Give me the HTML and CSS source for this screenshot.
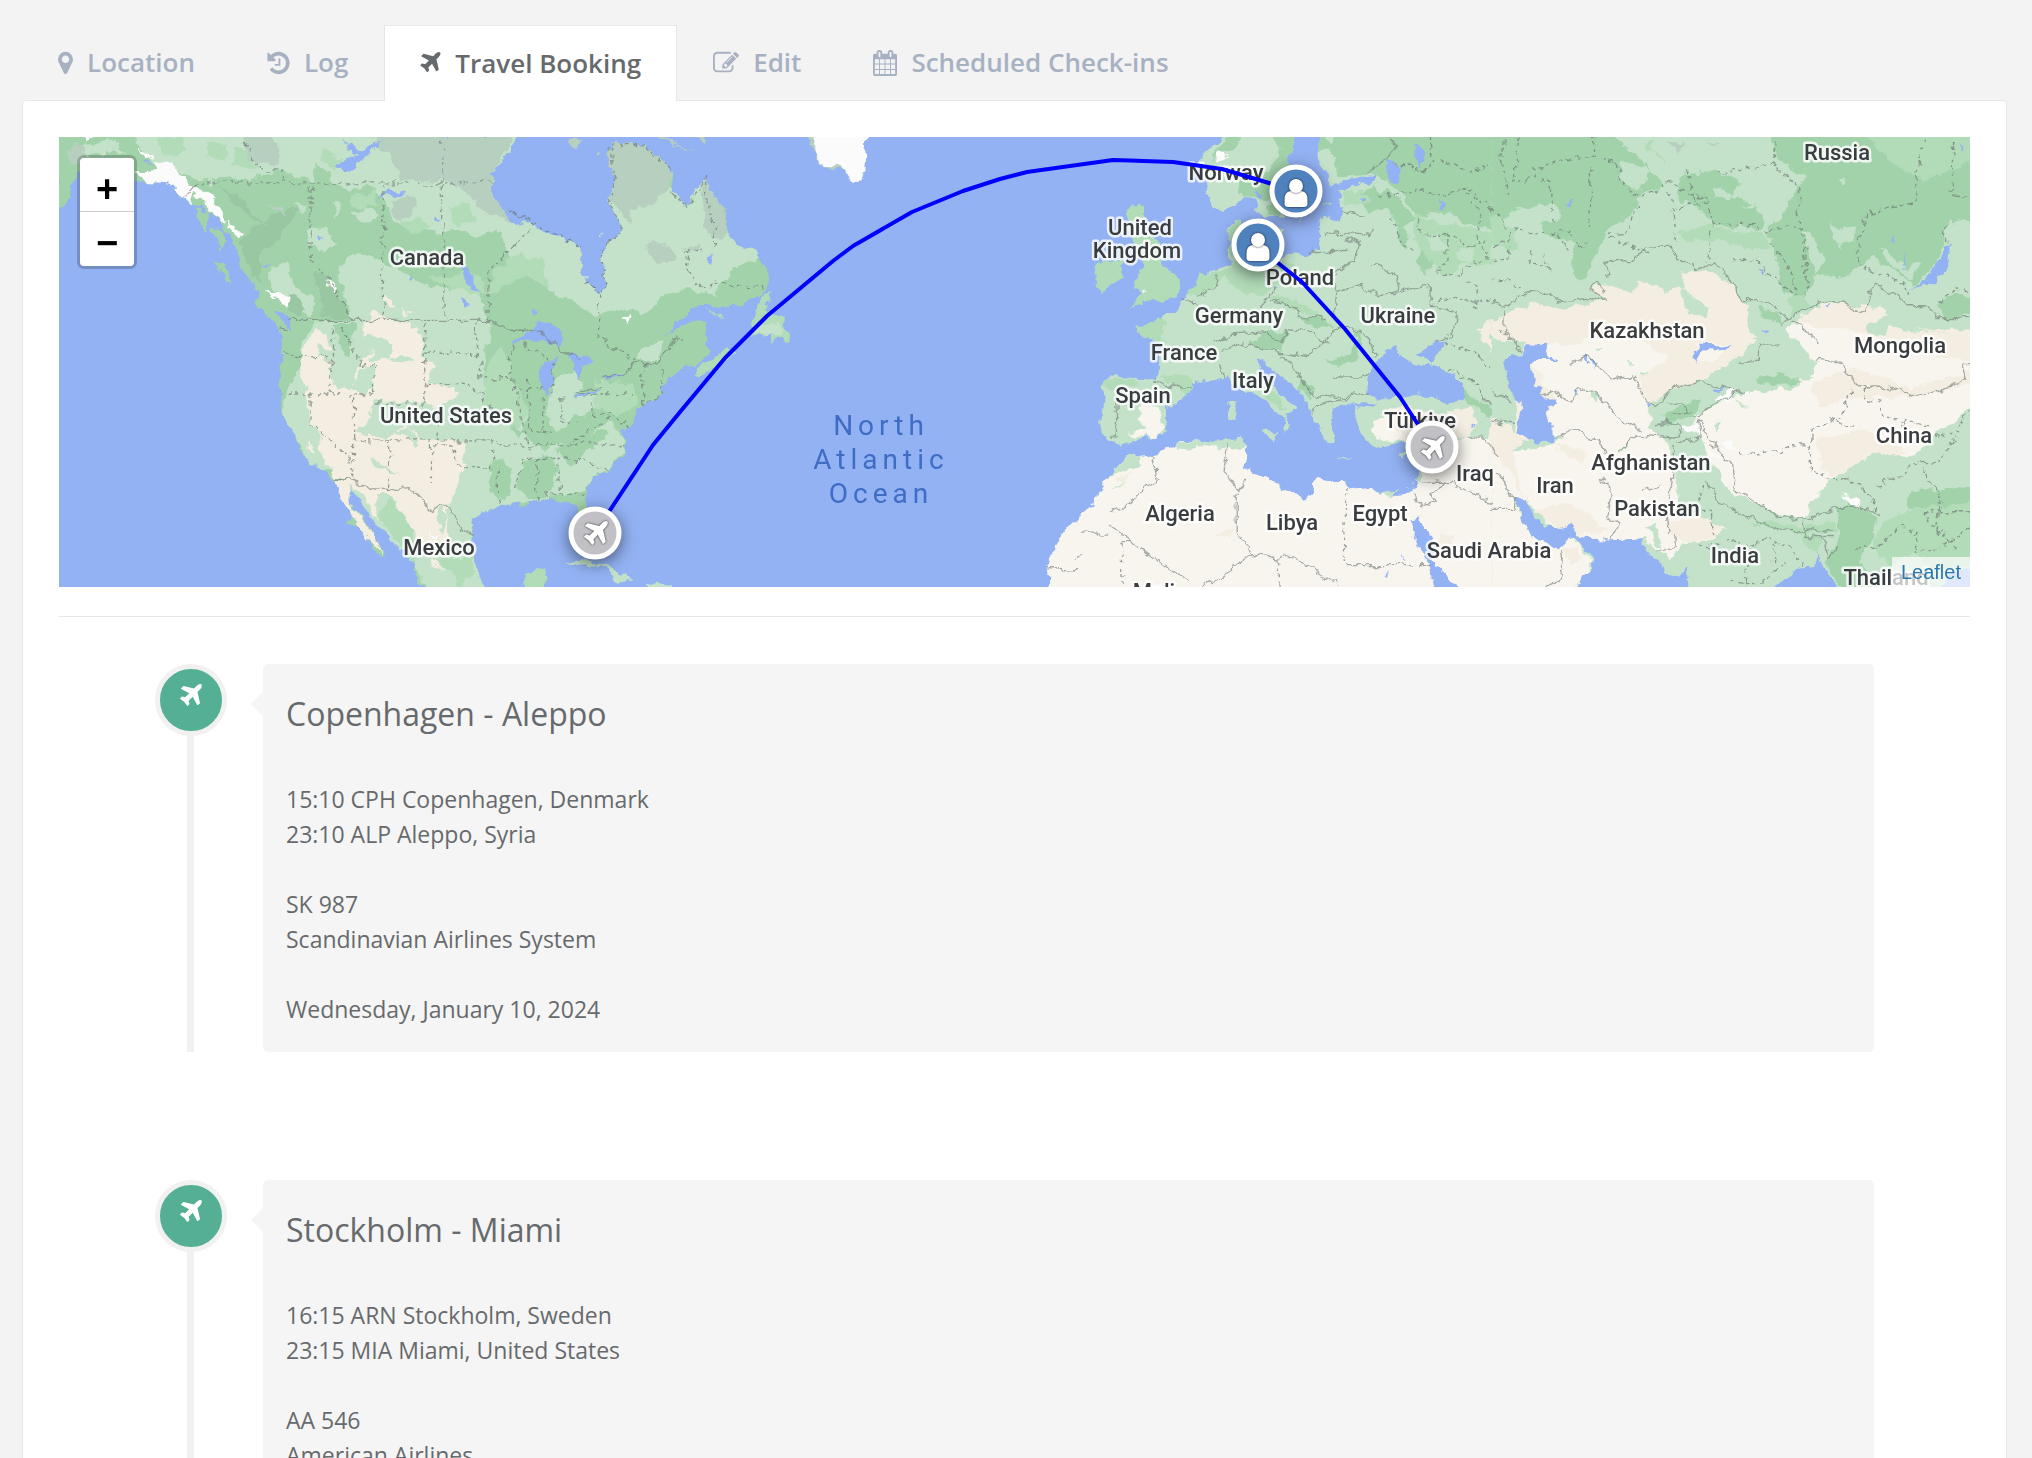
FILE: index.html
```html
<!DOCTYPE html>
<html lang="en">
  <head>
    <meta charset="utf-8">
    <title>Travel Booking</title>
    <link rel="stylesheet" href="styles.css">
  </head>
  <body>
    <!-- Shared icons -->
    <svg class="sprite" aria-hidden="true">
      <symbol id="icon-plane" viewBox="192 128 1408 1536">
        <path d="M1568 160q44 52 12 148t-108 172l-161 161 160 696q5 19-12 33l-128 96q-7 6-19 6-4 0-7-1-15-3-21-16l-279-508-259 259 53 194q5 17-8 31l-96 96q-9 9-23 9h-2q-15-2-24-13l-189-252-252-189q-11-7-13-23-1-13 9-25l96-97q9-9 23-9 6 0 8 1l194 53 259-259-508-279q-14-8-17-24-2-16 9-27l128-128q14-13 30-8l665 159 160-160q76-76 172-108t148 12z"/>
      </symbol>
    </svg>

    <nav class="tabs">
      <a class="tab" href="#location">
        <svg class="icon icon-marker" viewBox="384 0 1024 1792"><path d="M1152 640q0-106-75-181t-181-75-181 75-75 181 75 181 181 75 181-75 75-181zm256 0q0 109-33 179l-364 774q-16 33-47.5 52t-67.5 19-67.5-19-46.5-52l-365-774q-33-70-33-179 0-212 150-362t362-150 362 150 150 362z"/></svg>
        Location
      </a>
      <a class="tab" href="#log">
        <svg class="icon icon-log" viewBox="128 0 1536 1792"><path d="M1664 896q0 156-61 298t-164 245-245 164-298 61q-172 0-327-72.5t-264-204.5q-7-10-6.5-22.5t8.5-20.5l137-138q10-9 25-9 16 2 23 12 73 95 179 147t225 52q104 0 198.5-40.5t163.5-109.5 109.5-163.5 40.5-198.5-40.5-198.5-109.5-163.5-163.5-109.5-198.5-40.5q-98 0-188 35.5t-160 101.5l137 138q31 30 14 69-17 40-59 40h-448q-26 0-45-19t-19-45v-448q0-42 40-59 39-17 69 14l130 129q107-101 244.5-156.5t284.5-55.5q156 0 298 61t245 164 164 245 61 298zm-640-288v448q0 14-9 23t-23 9h-320q-14 0-23-9t-9-23v-64q0-14 9-23t23-9h224v-352q0-14 9-23t23-9h64q14 0 23 9t9 23z"/></svg>
        Log
      </a>
      <a class="tab active" href="#travel" aria-current="page">
        <svg class="icon icon-travel"><use href="#icon-plane"/></svg>
        Travel Booking
      </a>
      <a class="tab" href="#edit">
        <svg class="icon icon-edit" viewBox="0 0 1792 1792"><path d="M888 1184l116-116-152-152-116 116v56h96v96h56zm440-720q-16-16-33 1l-350 350q-17 17-1 33t33-1l350-350q17-17 1-33zm80 594v190q0 119-84.5 203.5t-203.5 84.5h-832q-119 0-203.5-84.5t-84.5-203.5v-832q0-119 84.5-203.5t203.5-84.5h832q63 0 117 25 15 7 18 23 3 17-9 29l-49 49q-14 14-32 8-23-6-45-6h-832q-66 0-113 47t-47 113v832q0 66 47 113t113 47h832q66 0 113-47t47-113v-126q0-13 9-22l64-64q15-15 35-7t20 29zm-96-738l288 288-672 672h-288v-288zm444 132l-92 92-288-288 92-92q28-28 68-28t68 28l152 152q28 28 28 68t-28 68z"/></svg>
        Edit
      </a>
      <a class="tab" href="#checkins">
        <svg class="icon icon-calendar" viewBox="64 0 1664 1792"><path d="M192 1664h288v-288h-288v288zm352 0h320v-288h-320v288zm-352-352h288v-320h-288v320zm352 0h320v-320h-320v320zm-352-384h288v-288h-288v288zm736 736h320v-288h-320v288zm-384-736h320v-288h-320v288zm768 736h288v-288h-288v288zm-384-352h320v-320h-320v320zm-352-864v-288q0-13-9.5-22.5t-22.5-9.5h-64q-13 0-22.5 9.5t-9.5 22.5v288q0 13 9.5 22.5t22.5 9.5h64q13 0 22.5-9.5t9.5-22.5zm736 864h288v-320h-288v320zm-384-384h320v-288h-320v288zm384 0h288v-288h-288v288zm32-480v-288q0-13-9.5-22.5t-22.5-9.5h-64q-13 0-22.5 9.5t-9.5 22.5v288q0 13 9.5 22.5t22.5 9.5h64q13 0 22.5-9.5t9.5-22.5zm384-64v1280q0 52-38 90t-90 38h-1408q-52 0-90-38t-38-90v-1280q0-52 38-90t90-38h128v-96q0-66 47-113t113-47h64q66 0 113 47t47 113v96h384v-96q0-66 47-113t113-47h64q66 0 113 47t47 113v96h128q52 0 90 38t38 90z"/></svg>
        Scheduled Check-ins
      </a>
    </nav>

    <main class="panel">
      <div class="map">
        <svg class="map-canvas" viewBox="0 0 1911 450" preserveAspectRatio="xMidYMid slice" role="img" aria-label="Flight routes">
          <!-- Roughens coasts and borders -->
          <filter id="rough" filterUnits="userSpaceOnUse" x="-10" y="-10" width="1935" height="475" color-interpolation-filters="sRGB">
            <feTurbulence type="fractalNoise" baseFrequency=".09" numOctaves="3" seed="4"/>
            <feDisplacementMap in="SourceGraphic" scale="11" xChannelSelector="R" yChannelSelector="G"/>
          </filter>
          <g class="terrain" transform="translate(-3 -4) scale(1.003 1.018)">
          <!-- North America -->
          <g transform="translate(-9 -7) scale(.33333)">
            <path class="forest" d="M27 21V265L45 240 75 210 65 175 90 140 260 158 300 165 370 170 400 205 430 235 470 240 500 270 530 300 555 340 575 390 580 420 610 450 630 490 615 520 640 550 690 590 700 640 700 700 695 760 705 860 740 910 755 950 780 990 820 1000 860 1045 880 1100 915 1150 900 1165 930 1175 960 1220 970 1245 1005 1272 1015 1262 985 1220 960 1180 935 1140 905 1105 905 1065 935 1075 960 1120 990 1160 1020 1195 1020 1215 1060 1240 1100 1290 1110 1340 1140 1372H1310L1270 1320 1275 1270 1275 1215 1270 1160 1310 1130 1360 1115 1400 1112 1415 1122 1440 1120 1435 1105 1500 1095 1535 1110 1570 1105 1590 1130 1600 1180 1620 1170 1615 1100 1620 1055 1670 1015 1730 970 1730 930 1720 890 1735 905 1750 870 1775 825 1840 795 1840 765 1880 725 1950 700 1990 670 1975 640 1965 615 1980 585 1950 570 1910 580 1850 620 1880 580 1930 535 2070 530 2140 490 2162 470 2158 430 2120 375 2070 355 2040 320 2035 265 2000 220 1970 150 1950 190 1945 220 1915 235 1880 215 1870 190 1870 135 1830 105 1790 55 1730 60 1690 50 1680 90 1700 165 1675 215 1710 250 1720 300 1695 350 1655 375 1670 430 1675 470 1648 500 1605 460 1598 360 1540 350 1490 325 1435 285 1380 285 1365 245 1330 205 1330 140 1365 80 1390 40 1418 21z"/>
            <!-- lighter woodland and prairie -->
            <path class="light" d="M260 21L300 100 390 130 450 160 520 150 600 160 690 130 800 165 800 21zM800 21L780 80 840 150 900 190 960 175 1000 210 1050 290 1100 300 1170 320 1230 300 1290 330 1350 300 1400 400 1480 390 1500 480 1570 520 1640 560 1720 540 1790 550 1850 500 1930 480 2000 500 2050 420 2130 390 2120 375 2070 355 2040 320 2000 220 1970 150 1915 235 1870 190 1790 55 1690 50 1700 165 1675 215 1720 300 1655 375 1675 470 1648 500 1605 460 1598 360 1435 285 1380 285 1330 205V140L1418 21z"/>
            <path class="light" d="M870 410L930 375 960 380 1000 400 1050 420 1130 470 1200 480 1290 480 1310 540 1322 575 1340 620 1310 660 1300 740 1380 760 1440 850 1420 900 1480 960 1600 900 1650 850 1720 900 1730 960 1620 1055 1600 1080 1500 1090 1440 1110 1360 1115 1270 1160 1275 1270 1310 1372H1140L1100 1290 1020 1215 905 1065 880 1030 780 990 740 910 705 860 710 800 760 700 760 640 800 580 910 570z"/>
            <path class="light" d="M770 310L830 300 870 350 820 365 790 350zM660 430L720 400 740 480 800 500 790 580 750 540 670 470zM1520 740L1580 720 1600 760 1580 800 1660 790 1640 840 1580 860 1530 900 1490 860zM1770 660L1850 630 1830 690 1770 690zM90 60L200 40 240 80 200 75 110 90zM470 90L500 100 490 120zM540 80L570 100 550 130 530 110zM740 220L780 240 760 260zM850 220L880 230 870 270zM910 260L960 240 990 260 950 290zM480 150L510 170 490 180z"/>
            <path class="mid" d="M1140 440L1200 450 1240 430 1300 440 1310 500 1250 490 1200 470 1160 460zM1310 500L1340 430 1400 380 1480 390 1500 480 1430 440 1380 470zM1300 740L1360 640 1400 760 1440 850 1400 900 1370 850 1310 830zM1640 750L1750 760 1770 820 1700 850 1640 840zM1020 1090L1090 1170 1100 1290 1040 1220 990 1150zM1150 1290L1210 1310 1230 1372 1270 1320 1275 1270 1210 1270zM560 60L600 80 640 130 560 120zM480 40L540 60 530 100 470 90zM820 60L880 100 860 140 830 110zM900 210L980 190 990 240 930 240zM1050 290L1110 270 1150 300 1090 320zM1200 240L1260 230 1280 280 1220 290zM330 40L400 30 420 80 360 90z"/>
            <path class="forest" d="M1330 990L1370 980 1390 1020 1385 1080 1340 1100 1320 1060zM1420 990L1500 970 1530 1010 1510 1080 1450 1100 1410 1070zM1580 870L1660 830 1690 860 1600 930 1520 960zM1530 950L1650 900 1680 910 1560 1000zM2050 440L2100 400 2140 400 2130 440 2070 470 2030 470zM1320 600L1400 580 1490 640 1480 690 1400 680 1340 640zM860 580L930 580 910 640 900 680 870 650zM1390 880L1420 900 1410 930z"/>
            <path class="dark" d="M640 380L690 330 740 270 760 250 730 240 680 260 610 310 580 350 600 420 640 460zM800 430L830 440 870 490 905 560 870 565 825 560 820 500zM520 180L590 220 660 300 600 260 540 220zM720 490L770 520 760 560 730 550z"/>
            <path class="tundra" d="M960 21H1418L1390 40 1365 80 1330 140V205L1365 245 1380 285 1320 260 1270 210 1200 160 1050 160 1030 80 980 50zM580 21H670L700 80 690 115 640 110 600 90zM1025 220L1090 200 1110 240 1060 280 1030 250zM60 80L90 50 110 60 100 110 65 105zM1690 50L1790 55 1870 135 1860 190 1800 240 1760 230 1740 290 1720 250 1675 215 1700 165 1680 90zM1960 180L1970 150 2000 220 2035 265 2040 320 2000 330 1970 320zM1790 350L1850 345 1880 380 1860 400 1820 400zM1900 360L1950 350 1940 370zM660 230L700 230 715 260 690 250z"/>
            <!-- dry west -->
            <path class="desert" d="M800 595L835 615 855 665 810 645 805 680 850 690 845 720 860 760 880 780 905 765 950 790 985 770 980 740 915 745 940 690 975 655 960 700 1010 700 1040 650 990 625 950 610 950 585 975 540 1020 575 1080 580 1120 620 1130 700 1160 695 1135 760 1200 770 1235 790 1150 830 1130 815 980 815 990 790 970 830 955 880 920 910 1020 920 1070 880 1130 930 1250 925 1245 1010 1220 1080 1195 1110 1150 1130 1080 1065 1000 1075 905 1045 860 1035 815 960 825 920 790 875 780 810 755 705 770 650zM860 1045L905 1045 1080 1065 1150 1130 1200 1110 1200 1190 1190 1220 1130 1260 1200 1310 1150 1290 1100 1200 1075 1150 1020 1085 985 1085 990 1160 935 1075 905 1065 905 1105 985 1220 1010 1262 960 1220 915 1150 880 1100zM780 920L805 975 775 950zM1005 500L1045 525 1005 520zM1060 540L1095 550 1070 555z"/>
            <path class="desert" d="M960 690L1130 690 1130 810 980 810 910 910 820 900 900 780zM920 925L1240 925 1220 1050 1080 1060 920 1030z"/>
            <path class="light" d="M960 970L1000 1000 1050 1025 1010 1020 970 1000zM1040 900L1080 890 1110 920 1100 950 1080 920zM1020 690L1060 670 1100 690 1060 700zM1180 1110L1200 1150 1180 1200 1165 1150zM940 720L975 700 985 770 950 790 910 770zM920 905L960 870 975 830 985 880 950 910z"/>
            <path class="snow" d="M265 135L330 130 320 100 370 110 410 150 430 180 470 190 500 220 530 260 535 290 500 270 470 220 440 200 430 235 400 205 370 170 300 165zM540 280L590 320 580 335 545 300zM650 480L680 490 720 500 725 530 680 510zM830 455L860 460 865 490 840 475zM1145 1190L1175 1210 1160 1220zM270 70L320 85 300 100zM110 25L145 30 115 45zM1715 570L1750 560 1740 580z"/>
            <!-- lakes and inlets -->
            <path class="water" d="M860 120L930 85 880 40 940 70 1010 40 970 75 920 125 880 130zM790 105L830 107zM985 220L1020 185 1080 198 1010 205zM1235 415L1260 420 1295 490 1260 470zM1240 510L1262 525 1250 535zM1080 460L1100 435 1095 450zM640 412L680 412 650 418zM685 540L720 560 735 605 720 590 690 560zM1390 640L1430 615 1470 580 1510 580 1545 620 1540 650 1480 630 1440 635zM1475 760L1480 700 1540 675 1510 700 1510 760 1498 795zM1560 670L1610 680 1640 690 1625 710 1605 700 1595 750 1575 730zM1580 795L1660 770 1640 785 1590 800zM1655 745L1730 730 1700 748zM1450 540L1470 545 1460 560zM440 240L490 320 480 270 530 320 520 370 500 330zM510 400L540 410 540 460 515 420zM1975 390L1985 380 1995 395 1985 410zM285 105L310 112 290 115zM1170 260L1180 275 1165 280zM1305 30L1320 30 1312 40zM1170 21H1200V35zM810 320L830 328 815 332z"/>
            <path class="forest" d="M440 245L485 250 475 320zM490 295L530 310 530 370 500 330zM505 405L535 405 545 465 520 430z"/>
            <path class="border solid" d="M720 573H1322L1380 602H1460L1530 650 1595 690M1660 745L1720 735 1755 700H1828L1880 625 1900 630M860 1040L905 1045 980 1070 1080 1063 1150 1130 1180 1112 1210 1130 1240 1190 1280 1205M695 590L720 597M1580 785L1660 765M450 170L412 210"/>
            <path class="border" d="M460 168H1330M790 180V400L870 490 912 570M1005 170L1003 570M1180 21L1188 570M1322 573V430L1455 293 1380 245M590 50L640 130H700L705 165M705 662L760 680H857V590M850 690V790M720 790H980V700L940 710 880 590M1130 580V820H980M1130 670H1290L1280 580M1290 670L1295 745H1400M1130 765H1280L1310 810 1330 830M790 790V880L905 975 917 1040V790M917 925H1330V1010L1225 998 1215 940H1150V1055M1022 925V1070M1170 830V925M1330 940H1730M1350 1110V1010M1405 1070L1420 980H1570M1465 1100V980M1532 975V1080M1490 1085H1610M1440 950L1400 780 1380 700 1400 640M1410 775H1490M1440 750V900L1520 905M1540 800V870L1580 880M1485 800L1480 900M1590 790H1750M1630 790V850H1700L1740 890M1785 700V820L1840 795V710M1650 500V620L1680 650 1760 690M1380 245L1600 360M1605 460L1650 495 1675 470 1655 375 1720 300 1680 220 1700 165 1685 55H1790L1830 105 1870 125M1870 200L1915 235 1950 200 1970 150 2000 350M2000 470H2130L2140 490M1910 370L1960 360M1920 360L1915 430 1970 480 2000 460M1430 640V660L1510 690V790M1560 940L1680 860M1580 980L1680 1010"/>
            <path class="mid" d="M1945 740L1940 715 1990 690 2030 655 2070 670 2030 690 1970 730zM2100 600L2120 550 2140 495 2165 490 2150 550 2210 565 2205 595 2225 625 2215 640 2200 620 2165 640 2170 615 2100 615zM1425 1372L1430 1320 1495 1305 1480 1372zM1980 545L2030 565 2000 560z"/>
            <path class="light" d="M2120 585L2200 585 2190 620 2110 610zM1550 1295L1580 1278 1630 1285 1700 1305 1760 1340H1700L1680 1310 1630 1292zM1790 1345L1850 1350 1890 1372H1805zM1600 440L1625 440 1610 450zM1650 325L1662 310 1655 330z"/>
            <path class="tundra" d="M1820 21L1940 80 1890 60 1830 35zM1930 21H1965V48zM1563 50L1570 38 1602 38 1585 65zM1640 75L1658 70 1645 90z"/>
            <path class="tundra" d="M2265 21L2300 80 2325 125 2370 130 2430 168 2440 120 2400 21z"/>
            <path class="snow" d="M2290 21L2300 70 2325 125 2365 110 2395 150 2430 168 2445 120 2450 50 2465 21z"/>
          </g>

          <!-- Europe and North Africa -->
          <g transform="translate(941 -7) scale(.33333)">
            <path class="light" d="M690 21L640 60 610 80 600 120 615 170 625 200 635 235 660 250 700 235 735 205 760 215 770 250 790 270 850 270 855 230 870 130 860 90 890 30 905 21zM965 21L955 70 960 120 985 150 985 175 1080 150 1130 150 1110 165 1010 190 1020 215 1025 260 1020 285 975 265 955 290V355L920 385 880 375 830 400 850 300 820 290 780 300 730 390 720 270 680 295 690 330V400L640 425 605 440 585 485 540 515 535 540 510 550 465 580 400 590 425 620 480 640 475 720 470 745 340 740 310 750 315 800 300 880 320 925 365 940 440 920 490 910 500 870V830L560 795 575 755 640 750 680 735 700 760 750 790 800 815 855 865 850 905 865 880 860 850 890 830 840 800 820 770 780 730 765 685 790 690 820 730 900 780 920 810 925 850 960 890 965 925 990 935 1000 905 990 865 1000 830 1060 815 1070 825 1065 870 1085 920 1130 950 1200 935 1260 940 1520 1000V21z"/>
            <path class="forest" d="M690 21L730 21 700 70 640 90 620 110zM800 21H905L890 30 860 90 870 130 800 220 720 200 700 130 760 150 810 120 840 70zM965 21L955 70 1000 80 1010 150 1110 140 1180 180 1250 270 1330 250 1400 290 1520 320V21zM1080 200L1130 170 1200 220 1240 280 1200 300 1150 240 1100 260zM1180 280L1230 330 1210 370 1190 330zM1260 350L1290 400 1270 450 1255 400zM740 640L820 600 860 615 840 660 780 660zM970 690L1050 680 1070 620 1050 600 1080 600 1075 680 1010 710zM890 560L980 570 1000 600 940 590zM900 740L940 780 930 800 890 770zM1340 740L1400 790 1500 850V870L1400 820zM800 230L850 220 840 270 800 260z"/>
            <path class="mid" d="M1240 260L1320 290 1400 300 1500 330V420L1400 400 1330 440 1280 390 1240 340zM600 440L680 420 700 390 680 300 720 270 720 330 740 400 830 410 880 400 840 460 780 500 720 490 680 440 640 470 600 500 560 500zM400 590L465 580 470 560 500 575 480 600 490 640 425 620zM480 740L560 730 575 755 560 795 530 770zM310 750L400 745 420 765 330 775zM800 500L900 520 960 560 900 550 830 520zM1020 190L1080 190 1110 220 1060 240 1030 230zM780 750L830 800 860 840 800 810z"/>
            <path class="light" d="M720 40L780 21 820 60 820 110 760 140 740 100zM640 190L700 180 690 240 650 245zM970 120L1010 130 1000 145zM1120 165L1160 180 1140 200zM970 30L1000 30 990 60zM1270 330L1310 320 1340 360 1300 370zM1360 370L1410 360 1420 390 1380 400z"/>
            <path class="snow" d="M640 95L660 75 680 90 660 105zM430 485L445 488 435 497z"/>
            <path class="mid" d="M290 400L370 395V450L305 490 283 475zM380 260L400 230 435 235 425 265 430 300 480 340 490 400 505 430 540 455 530 500 490 515H440L390 535 420 500 440 490 400 480 415 430 430 400 400 350z"/>
            <path class="light" d="M680 815L705 810V870L683 865zM775 905L835 895 825 930zM1015 975L1055 975 1050 980 1015 980zM1200 965L1220 955 1210 975z"/>
            <path class="sand" d="M425 800L460 820 490 860 490 890 470 915 410 920 390 905 440 890 415 860zM1120 870L1150 850 1200 880 1220 930 1150 930 1110 900z"/>
            <path class="desert" d="M1140 850L1200 820 1240 830 1320 850 1400 830 1430 870 1400 920 1240 930 1200 910zM1430 600L1500 555V730L1460 650z"/>
            <!-- Sahara -->
            <path class="sand" d="M1260 940L1250 1040 1235 1070 1215 1080 1180 1095 1130 1080 1035 1055 960 1035 930 1050 935 1080 910 1100 890 1080 840 1070 825 1045 770 1030 725 1005 740 970 735 935 715 920 680 930 540 935 460 970 420 975 380 960 370 980 355 1010 320 1035 295 1070 290 1110 225 1160 190 1200 150 1280 140 1310 155 1372H1520V920L1420 920 1330 930z"/>
            <path class="light" d="M380 960L420 975 420 1010 360 1020 320 1035 355 1010zM520 940L720 920 740 940 720 955 620 945 550 955zM1140 1080L1195 1070 1165 1100zM325 1075L380 1040 350 1065zM1255 1000L1265 1045 1250 1040z"/>
            <path class="desert" d="M640 1200L700 1190 690 1220zM1310 1190L1360 1210 1350 1235 1320 1230zM340 1040L400 1020 370 1060z"/>
            <path class="water" d="M1095 790L1100 740 1130 690 1150 655 1185 650 1215 690 1250 705 1300 695 1330 720 1385 760 1390 800 1345 820 1300 800 1240 790 1180 800 1130 810zM1245 675L1300 640 1335 635 1310 670 1290 690zM1065 820L1125 820 1115 832 1075 830zM1230 1160L1250 1155 1290 1215 1300 1290 1340 1330 1385 1372H1300L1290 1300 1235 1205zM1150 90L1200 120 1195 165 1160 160zM1240 50L1270 80 1265 120 1240 90zM1310 215L1330 230 1315 245zM1195 1110L1200 1130zM1200 1255L1210 1275 1203 1275zM1150 1330L1165 1312 1155 1335zM1410 882L1425 876 1415 888zM1080 210L1095 215 1085 225zM760 190L790 200 780 220zM820 475L840 472 825 480zM870 130L855 230 930 230 985 175 960 120z"/>
            <path class="mid" d="M890 250L905 255 895 285zM970 235L990 225 985 235z"/>
            <path class="border solid" d="M465 750L500 765 565 775M650 440L640 475 590 500M550 500L600 540M640 640L700 615 800 610 840 640 860 600 940 610 970 640 920 680 850 670 790 660 720 640 660 670M780 530L820 490 830 470M810 515L880 530 900 560 980 570M970 640L1010 590 1080 600 1110 640 1120 680M840 680L870 700 900 740 930 790 1000 800 1100 790M1000 740H1080L1105 730M930 850L960 820 1050 800M1010 490L1080 470 1130 500 1180 490 1190 450 1160 420 1110 410M1000 560L1010 490 980 440 1060 400 1075 350 1040 330M930 370L1040 370M970 320L1060 315 1110 320 1110 300M1025 250L1090 270M650 700L665 740M1180 490L1280 470 1290 530 1365 545 1350 620 1300 640M345 800L350 870 340 920M1440 800L1500 850M1400 920L1450 920 1490 970M1265 1050L1330 1050 1420 1080 1500 1130M1240 1080L1260 1125 1305 1100 1290 1080 1340 1050M460 975L475 1045 440 1060 390 1115 320 1135M320 1170L570 1350M140 1308H225M245 1203H315M220 1285L245 1262M360 1225H400M680 940L670 1020 710 1070 740 1040M710 1080V1200L755 1262 830 1280 850 1262 1010 1350M755 1262L630 1350 575 1362M1035 1293H1235M1260 1293H1290M1170 30L1180 60 1100 140"/>
            <path class="border" d="M1180 110L1280 130 1300 100 1400 130 1500 110M1130 210L1250 190 1340 200 1400 180 1440 230 1500 210M1250 280L1280 330 1360 320 1400 360 1460 340M1170 270L1200 350 1240 370M1300 430L1380 440 1420 390 1500 400M1290 530L1360 500 1400 520 1500 510M1340 320V400L1300 430M1035 1060L1030 1290M365 1230L370 1372M830 1280L840 1372M1400 200L1440 270 1420 330 1460 380M1290 30L1300 100M1330 640L1400 660 1500 730M1340 720L1430 760 1440 800M1400 460L1430 480 1420 540"/>
          </g>

          <!-- Asia -->
          <g transform="translate(1431 -7) scale(.3457 .33333)">
            <path class="light" d="M0 21H1400V1372H0z"/>
            <path class="forest" d="M0 21H340L420 90 470 140 500 180 430 200 400 270 340 300 300 380 260 460 235 430 240 340 150 320 130 250 70 250 0 290zM810 21H1400V300L1320 280 1290 400 1230 470 1180 440 1100 380 1050 420 1000 450 930 440 900 520 840 490 820 370 790 310 850 250 880 190 910 150 820 100zM540 150L640 130 720 160 700 200 760 240 790 280 770 310 720 290 690 310 640 290 600 240 540 220zM1290 520L1340 500 1389 510V550L1320 570 1290 545zM1000 1130L1050 1110 1110 1150 1100 1220 1060 1280 1100 1372H1010L960 1280 1000 1220zM1210 1040L1300 1000 1389 1060V1110L1280 1140 1200 1120z"/>
            <path class="mid" d="M1080 21L1150 100 1250 160 1400 100V21zM540 310L620 290 700 320 780 310 810 370 700 350 640 330 560 340zM0 260L60 300 80 370 0 350zM850 520L900 500 920 530 870 560zM1120 1180L1200 1130 1389 1110V1290L1300 1310 1210 1260 1150 1300 1100 1240zM640 1100L760 1150 880 1180 990 1170 1000 1200 880 1200 740 1170 640 1130zM890 1200L960 1210 940 1260 900 1240zM470 21L530 60 500 110 440 60z"/>
            <path class="light" d="M470 21L800 21 780 100 700 130 620 120 520 130 500 100 460 70zM980 290L1010 310 1050 290 1055 330 1010 360 985 340zM70 240L180 230 210 270 130 290zM370 100L460 130 430 190 370 160zM1000 160L1020 150 1025 180 1010 180zM1310 290L1389 270V330L1330 340 1320 310zM720 250Q760 210 795 260L770 235zM900 300L930 330 960 400 940 440 910 380zM1120 360L1200 420 1240 400 1210 450 1150 410zM640 180L700 200 680 220 640 210z"/>
            <path class="tundra" d="M510 45L560 55 540 85zM620 40L660 55 640 60z"/>
            <path class="desert" d="M0 580L60 545 140 520 200 540 330 510 280 480 330 470 400 490 430 450 480 480 550 480 555 430 600 430 640 430 690 470 720 515 745 530 735 590 770 620 700 690 680 730 600 750 520 780 450 820 470 900 400 960 300 900 180 920 100 930 0 1000V850L70 880 50 700 100 640 0 640z"/>
            <path class="light" d="M0 620L40 640 80 650 40 700 75 800 70 900 0 860zM545 470L580 500 630 540 620 560 570 560zM560 500L600 560 580 540z"/>
            <path class="sand" d="M120 700L160 640 240 640 300 620 350 630 420 620 480 660 510 690 430 740 440 800 470 900 520 940 530 1040 540 1120 500 1150 600 1150 660 1180 640 1220 560 1230 520 1280 440 1215 340 1222 240 1210 180 1190 100 1100 0 1100V910L60 960 130 950 180 925 160 850 190 800 150 760zM0 1100H60L110 1200 230 1210 290 1290 240 1372H0zM590 850L720 790 880 770 940 700 850 600 930 540 1050 540 1110 580 1150 600 1400 640V820L1340 900 1200 980 1050 1000 1010 1040 970 1060 900 1160 820 1140 690 1080 600 920zM590 640H690L650 690H600z"/>
            <path class="desert" d="M880 570L960 520 1080 530 1150 550 1100 580 1180 600 1400 600V690L1280 680 1180 650 1050 600 940 600zM920 760L1040 710 1200 770 1389 720V760L1230 800 1040 800 950 830zM940 920L1080 900 1200 960 1050 1000 1010 1040 950 1010zM120 1130L230 1110 340 1190 240 1210 180 1180zM500 1180L600 1150 680 1190 600 1230 540 1220zM0 900L60 960 100 1100 40 1000 0 960zM180 940L280 960 260 1000zM200 1220L260 1270 230 1290z"/>
            <path class="light" d="M700 690L800 700 930 740 880 760 760 780 650 770 560 800 510 830 560 860 600 850 560 900 490 890 450 890 500 810 600 750zM540 1040L620 1040 680 1100 830 1160 740 1170 660 1160 600 1130 540 1120zM570 1230L640 1220 700 1180 860 1200 930 1260 860 1320 800 1372H570L560 1280zM1075 590L1150 560 1140 620 1090 610zM1150 590L1170 560 1220 600 1310 610 1200 605zM390 690L410 705 390 700zM430 720L450 730 440 740zM300 650L320 655 305 660zM450 1180L480 1170 490 1240 470 1230zM510 930L550 920 560 1000 520 990zM640 880L670 870 650 900zM710 810L740 830 720 830zM750 620L840 600 790 640zM80 930L180 910 210 915 150 950zM270 770L310 790 300 810zM360 970L410 920 380 960zM910 1130L970 1050 1110 960 1200 980 1389 820V1060L1210 1080 1130 1060 1030 1110 960 1150z"/>
            <path class="forest" d="M490 850L560 820 600 800 580 860 500 880zM760 740L840 730 900 760 780 765zM1000 1130L1040 1100 1100 1150 1110 1200 1000 1180zM770 530L830 560 840 590 780 560z"/>
            <path class="snow" d="M660 790L710 775 690 810 650 810zM1010 1090L1040 1090 1070 1130 1030 1110zM540 880L610 880 600 910 560 900zM600 930L690 1000 640 970zM660 940L690 930 700 960zM720 780L750 780 730 795z"/>
            <path class="water" d="M75 900L90 830 65 790 45 770 50 740 35 710 40 690 80 665 110 638 155 640 165 680 195 690 130 690 115 720 125 760 150 765 150 800 185 800 190 820 160 830 155 850 180 890 178 930 130 938zM580 680L600 645 695 648 685 660 610 662 592 698zM1210 480L1250 460 1300 390 1315 350 1328 350 1310 430 1260 470zM1187 420L1192 370 1197 420zM1150 330L1165 320 1162 345zM440 815L465 820 450 830zM640 775L675 768 650 785zM780 600L810 608 795 615zM960 530L985 525 970 540zM770 420L792 425 785 432zM210 228L235 215 225 232zM267 690L275 675 280 710zM285 690L295 690 300 720zM1350 50L1360 65 1350 65zM1145 213L1165 213zM245 785L255 790 248 797zM65 1100H100L130 1160 190 1190 235 1175 245 1210 340 1222 435 1215 450 1250 490 1290 500 1320 540 1325 565 1300V1372H245L260 1335 295 1290 270 1250 230 1210 190 1245 130 1220 105 1190zM800 1372L860 1320 935 1295 940 1255 960 1300 1005 1372zM1290 1372L1330 1310 1389 1300 1400 1372z"/>
            <path class="border solid" d="M0 520L50 530 110 485 150 490 200 520 240 515 280 510 330 510 285 480 300 465 330 490M325 440L345 438 330 405 400 395 470 355H520L535 400 580 400 590 425 640 400 680 440 720 515 790 515 830 555 870 560 930 525 980 515 1040 530 1075 550 1100 470 1170 500 1200 530H1260L1300 565H1389M870 570L930 620 940 640M935 690L1000 700 1040 740 1050 765 1150 768 1230 800 1300 780 1365 745V700H1389M830 590L860 560M770 640L830 640M770 640V690L720 695M220 700L280 680 345 745 410 740 430 770 440 810 480 820 530 770 600 755 720 780 640 820 600 850 580 860M150 795L180 780 230 810 260 775 300 780 350 840 360 860 430 895M180 920L240 895 320 935 330 970M370 960L420 910 530 920 550 890 500 870 480 890M500 820L560 820 570 840 520 850M540 930L605 920 600 860 620 910 690 1000 700 1070 760 1110 830 1150 900 1160 990 1130 1050 1120 1120 1140M530 940L520 1060 500 1120 510 1200M435 1080L490 1060M350 1220L365 1175 330 1150 340 1080 320 1040M480 1250L530 1245 530 1200M620 1045L660 1110 740 1150 830 1190 900 1195 980 1190M900 1160V1210L980 1210M960 1210L970 1270 1000 1240M0 1130H60L70 1100M0 940L20 980M20 1020L70 1110M80 1370L190 1350 210 1290 205 1250M40 540L35 600 80 660M0 780L60 810M0 870L70 880"/>
            <path class="border" d="M40 21L30 100 50 200M80 30L65 170 130 150 170 170 175 280M295 21V90L170 110 120 130M295 90L360 110 370 160 430 210 480 190 520 160M290 120L280 300M520 240L540 340M510 160L610 230 530 240 510 190M420 230L400 310 340 320M610 200L640 290 750 290 790 310 900 300M640 290L620 400M830 21L810 110 700 130 650 140M810 110L890 190 880 250 900 300 910 500M800 340L850 400 870 460 890 510M700 390L770 400 820 450 870 500M1260 21L1225 130V220L1080 260 1050 400 1110 430 1180 460 1210 500M1330 50V200L1389 210M1310 290L1310 360M1290 520L1350 480 1389 490M720 965L830 960 880 940 920 940 930 890 1010 860 1040 780M920 940V1020L1000 1040 1070 1060 1110 1130M980 860L1020 890 1060 880M1080 770L1075 800 1120 820 1130 860 1200 870 1180 900M1210 870L1260 880 1260 920 1350 910V870L1389 830M1110 1060L1190 1030 1210 1000 1290 990 1340 920M1050 1250L1110 1240 1180 1180 1230 1200 1220 1260 1300 1240 1389 1180M1240 1010L1300 1100 1280 1180 1340 1250M680 1220L760 1240 790 1210 860 1240 900 1300M740 1270L730 1372M690 1340L770 1350 850 1290M600 1230L660 1240M0 240L60 330 0 360M60 300L150 320 220 310 260 360 290 340M0 400L50 390 60 350M120 370L110 400 170 420 150 380M0 450L60 460 90 480M340 330L400 350 460 380M190 320L230 370M560 130L580 200 620 210M20 590L60 640M610 1060L590 1130 630 1130 640 1220M820 1230L810 1290M1290 1200L1250 1140 1389 1140"/>
          </g>
          </g>

          <g class="ocean-name">
            <text x="822" y="298">North</text>
            <text x="822" y="332">Atlantic</text>
            <text x="822" y="366">Ocean</text>
          </g>
          <g class="country">
            <text x="368" y="128">Canada</text>
            <text x="387" y="286">United States</text>
            <text x="380" y="418">Mexico</text>
            <text x="1167" y="43">Norway</text>
            <text x="1081" y="98">United</text>
            <text x="1078" y="121">Kingdom</text>
            <text x="1241" y="148">Poland</text>
            <text x="1180" y="186">Germany</text>
            <text x="1339" y="186">Ukraine</text>
            <text x="1125" y="223">France</text>
            <text x="1194" y="251">Italy</text>
            <text x="1084" y="266">Spain</text>
            <text x="1361" y="291">Türkiye</text>
            <text x="1416" y="344">Iraq</text>
            <text x="1121" y="384">Algeria</text>
            <text x="1233" y="393">Libya</text>
            <text x="1321" y="384">Egypt</text>
            <text x="1430" y="421">Saudi Arabia</text>
            <text x="1778" y="23">Russia</text>
            <text x="1588" y="201">Kazakhstan</text>
            <text x="1841" y="216">Mongolia</text>
            <text x="1845" y="306">China</text>
            <text x="1592" y="333">Afghanistan</text>
            <text x="1496" y="356">Iran</text>
            <text x="1598" y="379">Pakistan</text>
            <text x="1676" y="426">India</text>
            <text x="1827" y="448">Thailand</text>
            <text x="1095" y="462">Mali</text>
          </g>

          <polyline class="route" points="536,396 594,308 621,275 666,221 708,179 774,124 794,109 853,75 904,54 941,42 968,35 1054,23 1114,25 1163,32 1210,46 1237,54"/>
          <polyline class="route" points="1199,108 1219,126 1243,145 1286,192 1341,260 1358,286 1373,310"/>

          <g class="pin" transform="translate(1237 54)">
            <circle class="person" r="24"/>
            <path d="M-11.5 12.500V8Q-11.500 1-5.500 0H5.500Q11.500 1 11.500 8V12.500Q11.500 16 8 16H-8Q-11.500 16-11.500 12.500z"/>
            <circle class="head" cy="-5" r="7"/>
          </g>
          <g class="pin" transform="translate(1199 108)">
            <circle class="person" r="24"/>
            <path d="M-11.5 12.500V8Q-11.500 1-5.500 0H5.500Q11.500 1 11.500 8V12.500Q11.500 16 8 16H-8Q-11.500 16-11.500 12.500z"/>
            <circle class="head" cy="-5" r="7"/>
          </g>
          <g class="pin" transform="translate(1373 310)">
            <circle class="airport" r="24"/>
            <use href="#icon-plane" x="-12" y="-11" width="26" height="26"/>
          </g>
          <g class="pin" transform="translate(536 396)">
            <circle class="airport" r="24"/>
            <use href="#icon-plane" x="-12" y="-12" width="26" height="26"/>
          </g>
        </svg>
        <div class="zoom-control">
          <button type="button" aria-label="Zoom in">+</button>
          <button type="button" aria-label="Zoom out">−</button>
        </div>
        <a class="attribution" href="#leaflet">Leaflet</a>
      </div>

      <hr class="divider">

      <section class="timeline">
        <article class="trip">
          <div class="trip-marker">
            <span class="badge"><svg><use href="#icon-plane"/></svg></span>
          </div>
          <div class="trip-card">
            <h2>Copenhagen - Aleppo</h2>
            <p>15:10 CPH Copenhagen, Denmark<br>23:10 ALP Aleppo, Syria</p>
            <p>SK 987<br>Scandinavian Airlines System</p>
            <p>Wednesday, January 10, 2024</p>
          </div>
        </article>
        <article class="trip">
          <div class="trip-marker">
            <span class="badge"><svg><use href="#icon-plane"/></svg></span>
          </div>
          <div class="trip-card">
            <h2>Stockholm - Miami</h2>
            <p>16:15 ARN Stockholm, Sweden<br>23:15 MIA Miami, United States</p>
            <p>AA 546<br>American Airlines</p>
          </div>
        </article>
      </section>
    </main>
  </body>
</html>
```
FILE: styles.css
```css
/* General body styling */
* {
  box-sizing: border-box;
}

body {
  font-family: "Open Sans", sans-serif;
  font-size: 23px;
  line-height: 35px;
  color: #676a6c;
  background-color: #f3f3f3;
  margin: 0;
  padding: 25px 25px 0 22px;
  height: 100vh;
  overflow: hidden;
}

.sprite {
  position: absolute;
  width: 0;
  height: 0;
}

/* Tabs */
.tabs {
  display: flex;
}

.tab {
  display: flex;
  align-items: center;
  gap: 14px;
  height: 75px;
  padding: 0 35px 1px;
  border: 1px solid transparent;
  border-bottom: none;
  font-size: 26px;
  font-weight: 600;
  color: #a7b1c2;
  text-decoration: none;
}

/* Active tab covers the top line of the panel */
.tab.active {
  position: relative;
  margin-bottom: -1px;
  height: 76px;
  color: #676a6c;
  background-color: #fff;
  border-color: #e7e7e7;
}

.icon {
  height: 26px;
  fill: currentColor;
}

.icon-marker {
  width: 15px;
}

.icon-log {
  width: 23px;
}

.icon-travel {
  width: 21px;
  height: 22px;
}

.icon-edit {
  width: 26px;
}

.icon-calendar {
  width: 24px;
}

/* Panel */
.panel {
  background-color: #fff;
  border: 1px solid #e7e7e7;
  border-radius: 4px;
  padding: 36px 36px 60px;
}

.divider {
  border: none;
  border-top: 1px solid #e7e7e7;
  margin: 29px 0 47px;
}

/* Map */
.map {
  position: relative;
  height: 450px;
  overflow: hidden;
  background-color: #93b2f3;
}

.map-canvas {
  display: block;
  width: 100%;
  height: 100%;
}

.terrain {
  filter: url(#rough);
}

.water {
  fill: #93b2f3;
}

.light {
  fill: #c3e2c9;
}

.mid {
  fill: #b2dbb8;
}

.forest {
  fill: #a2d2aa;
}

.dark {
  fill: #98c7a2;
}

.tundra {
  fill: #b7cfbf;
}

.desert {
  fill: #f3ede2;
}

.sand {
  fill: #f8f5ee;
}

.snow {
  fill: #fbfbfb;
}

.border {
  fill: none;
  stroke: #6f7a76;
  stroke-opacity: 0.7;
  stroke-width: 4;
  stroke-dasharray: 12 10;
}

.border.solid {
  stroke-dasharray: none;
  stroke-opacity: 0.6;
}

.country {
  font-family: Roboto, sans-serif;
  font-size: 22px;
  font-weight: 500;
  text-anchor: middle;
  fill: #3a3d40;
  stroke: rgba(255, 255, 255, 0.8);
  stroke-width: 5px;
  stroke-linejoin: round;
  paint-order: stroke;
}

.ocean-name {
  font-family: Roboto, sans-serif;
  font-size: 28px;
  letter-spacing: 5px;
  text-anchor: middle;
  fill: #3f6cc4;
}

.route {
  fill: none;
  stroke: #00f;
  stroke-width: 4;
  stroke-linejoin: round;
}

/* Round pins on the routes */
.pin {
  fill: #fff;
}

.pin circle {
  stroke: #fff;
  stroke-width: 5;
  filter: drop-shadow(0 4px 8px rgba(0, 0, 0, 0.5));
}

.pin .person {
  fill: #4f81bc;
}

.pin .airport {
  fill: #c0c0c5;
}

.pin path,
.pin use,
.pin .head {
  filter: drop-shadow(0 0 1px rgba(0, 0, 0, 0.8));
}

.pin .head {
  stroke: none;
}

.zoom-control {
  position: absolute;
  top: 18px;
  left: 18px;
  border: 3px solid rgba(0, 0, 0, 0.2);
  border-radius: 7px;
  background-clip: padding-box;
}

.zoom-control button {
  display: block;
  width: 54px;
  height: 54px;
  padding: 8px 0 0;
  border: none;
  border-radius: 0 0 4px 4px;
  background-color: #fff;
  color: #000;
  font: bold 38px/46px "Liberation Sans", sans-serif;
}

.zoom-control button:first-child {
  border-bottom: 1px solid #ccc;
  border-radius: 4px 4px 0 0;
}

.attribution {
  position: absolute;
  right: 0;
  bottom: 0;
  padding: 0 9px;
  background-color: rgba(255, 255, 255, 0.7);
  color: #2a78b0;
  font: 20px/30px "Liberation Sans", sans-serif;
  text-decoration: none;
}

/* Timeline */
.timeline {
  padding: 0 96px;
}

.trip {
  display: flex;
  gap: 36px;
  margin-bottom: 128px;
}

.trip-marker {
  display: flex;
  justify-content: center;
  width: 72px;
  background: linear-gradient(#f1f1f1, #f1f1f1) 32px 0 / 7px 100% no-repeat;
}

.badge {
  display: flex;
  justify-content: center;
  width: 72px;
  height: 72px;
  padding-top: 15px;
  border: 5px solid #f1f1f1;
  border-radius: 50%;
  background-color: #54af95;
}

.badge svg {
  width: 24px;
  height: 24px;
  fill: #fff;
}

.trip-card {
  position: relative;
  flex: 1;
  padding: 28px 23px 25px;
  border-radius: 5px;
  background-color: #f5f5f5;
}

/* Arrow pointing at the badge */
.trip-card::before {
  content: "";
  position: absolute;
  top: 28px;
  left: -12px;
  border: 12px solid transparent;
  border-left: none;
  border-right-color: #f5f5f5;
}

.trip-card h2 {
  margin: 0 0 46px;
  font-size: 32px;
  font-weight: 400;
  line-height: 44px;
}

.trip-card p {
  margin: 0 0 35px;
}

.trip-card p:last-child {
  margin-bottom: 0;
}
```
